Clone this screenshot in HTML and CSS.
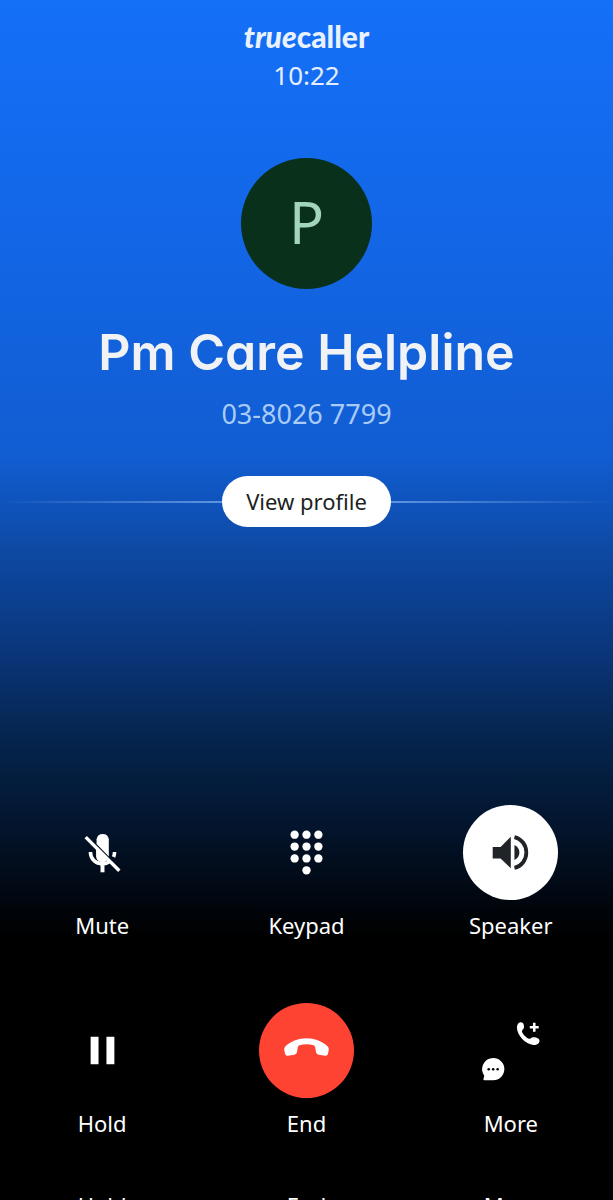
FILE: index.html
```html
<!DOCTYPE html>
<html lang="en">
<head>
    <meta charset="UTF-8">
    <meta name="viewport" content="width=device-width, initial-scale=1.0">
    <title>Truecaller</title>
    <link rel="stylesheet" href="styles.css">
</head>
<body>
    <main class="call-screen">
        <header class="top">
            <div class="logo"><em>true</em>caller</div>
            <time class="timer">10:22</time>
        </header>

        <section class="caller">
            <div class="avatar">P</div>
            <h1 class="name">Pm Care Helpline</h1>
            <p class="number">03-8026 7799</p>
        </section>

        <div class="profile-row">
            <button type="button" class="profile-btn">View profile</button>
        </div>

        <section class="controls">
            <button type="button" class="control">
                <span class="circle">
                    <svg viewBox="0 0 96 96" aria-hidden="true">
                        <path fill="#fff" d="M42 34.500a6.300 6.300 0 0 1 12.400 0v17.500L42 39.500z"/>
                        <path fill="#fff" d="M41.500 44l11.500 11.500a6.500 6.500 0 0 1-11.500-4z"/>
                        <path fill="none" stroke="#fff" stroke-width="3.600" d="M35.800 47.500c0 7 5.200 12 12.200 12 3 0 5.200-.8 7-2.200M60.200 47.500c0 2-.4 3.600-1 5"/>
                        <path fill="#fff" d="M46 59h4v9h-4z"/>
                        <path fill="none" stroke="#fff" stroke-width="3.400" d="M31 32.500l34 34"/>
                    </svg>
                </span>
                <span class="label">Mute</span>
            </button>
            <button type="button" class="control">
                <span class="circle">
                    <svg viewBox="0 0 96 96" aria-hidden="true" fill="#fff">
                        <circle cx="36" cy="30" r="4.200"/><circle cx="48" cy="30" r="4.200"/><circle cx="60" cy="30" r="4.200"/>
                        <circle cx="36" cy="42" r="4.200"/><circle cx="48" cy="42" r="4.200"/><circle cx="60" cy="42" r="4.200"/>
                        <circle cx="36" cy="54" r="4.200"/><circle cx="48" cy="54" r="4.200"/><circle cx="60" cy="54" r="4.200"/>
                        <circle cx="48" cy="66" r="4.200"/>
                    </svg>
                </span>
                <span class="label">Keypad</span>
            </button>
            <button type="button" class="control">
                <span class="circle white">
                    <svg viewBox="0 0 96 96" aria-hidden="true" fill="#202327">
                        <path d="M30 42.500h8L48.300 32v32L38 54h-8z"/>
                        <path d="M52 40.500c3 1.200 5 4.200 5 7.500s-2 6.300-5 7.500z"/>
                        <path fill="none" stroke="#202327" stroke-width="3.800" d="M52 32.500c7 1.500 12 7.800 12 15.500s-5 14-12 15.500"/>
                    </svg>
                </span>
                <span class="label">Speaker</span>
            </button>
            <button type="button" class="control">
                <span class="circle">
                    <svg viewBox="0 0 96 96" aria-hidden="true" fill="#fff">
                        <path d="M36 34h8v28h-8zM52 34h8v28h-8z"/>
                    </svg>
                </span>
                <span class="label">Hold</span>
            </button>
            <button type="button" class="control">
                <span class="circle red">
                    <svg viewBox="0 0 96 96" aria-hidden="true" fill="#fff">
                        <path d="M48 35.500c-8 0-15.500 2.800-21 8-1.300 1.300-1.700 2.700-1.400 4.500l.8 3.500c.4 1.300 1.300 1.900 2.600 1.700l6.800-1c1.400-.3 2.200-1 2.500-2.400l1-5.400c.2-1 .7-1.500 1.700-1.800 4.500-1.200 9.500-1.200 14 0 1 .3 1.500.8 1.700 1.800l1 5.400c.3 1.400 1.100 2.100 2.500 2.400l6.800 1c1.300.2 2.200-.4 2.600-1.700l.8-3.500c.3-1.800-.1-3.200-1.400-4.500-5.500-5.200-13-8-21-8z"/>
                    </svg>
                </span>
                <span class="label">End</span>
            </button>
            <button type="button" class="control">
                <span class="circle">
                    <svg viewBox="0 0 96 96" aria-hidden="true" fill="#fff">
                        <path d="M56 20.500c1-1.400 3.400-1.600 4.500-.2 1 1.200 1.400 3.400 1 5-.3 1.300-1.800 2-1.900 3.200-.1 2 4.800 7.300 7.200 7.700 1.400.2 2.400-1.400 3.900-1.600 2-.3 4.300.3 5.700 1.500 1.200 1 1.300 2.900.2 4.200-1.400 1.600-3.300 2.300-5.500 2.100-8-.8-16.500-9.800-16.600-17.400 0-1.700.5-3.200 1.500-4.500z"/>
                        <path fill="none" stroke="#fff" stroke-width="2.600" d="M72 20v9M67.500 24.500h9"/>
                        <path d="M30.500 55.500a11.300 11.300 0 1 1 0 22.600H21.500c-.8 0-1-.6-.8-1.200l.8-3.500a11.300 11.300 0 0 1 9-17.900z"/>
                        <g fill="#000"><circle cx="26" cy="67" r="1.300"/><circle cx="30.500" cy="67" r="1.300"/><circle cx="35" cy="67" r="1.300"/></g>
                    </svg>
                </span>
                <span class="label">More</span>
            </button>
        </section>

        <div class="next-row">
            <span class="label">Hold</span>
            <span class="label">End</span>
            <span class="label">More</span>
        </div>
    </main>
</body>
</html>
```
FILE: styles.css
```css
* {
    box-sizing: border-box;
}
body {
    margin: 0;
    background: #000;
    color: #fff;
    font-family: "Noto Sans", sans-serif;
}
button {
    font-family: inherit;
    border: none;
    padding: 0;
    cursor: pointer;
}
.call-screen {
    height: 100vh;
    overflow: hidden;
    background: linear-gradient(to bottom, #1470f8 0, #1366e6 20%, #115dd2 38%, #0d49a3 46%, #0a367c 54%, #052650 61%, #03142c 69%, #000 78%);
}
.top {
    display: flex;
    flex-direction: column;
    align-items: center;
    padding-top: 18px;
}
.logo {
    font-family: Lato, sans-serif;
    font-size: 30px;
    font-weight: 900;
    line-height: 36px;
    color: #e8f1fe;
}
.timer {
    font-size: 26px;
    line-height: 42px;
    color: #e4eefe;
}
.caller {
    display: flex;
    flex-direction: column;
    align-items: center;
    padding-top: 62px;
}
.avatar {
    width: 131px;
    height: 131px;
    border-radius: 50%;
    background: #08301b;
    color: #a2d5b9;
    font-size: 58px;
    line-height: 128px;
    text-align: center;
}
.name {
    margin: 31px 0 0;
    font-family: Inter, sans-serif;
    font-size: 50px;
    font-weight: 600;
    line-height: 64px;
    font-feature-settings: "cv11";
    color: #f0f2f5;
}
.number {
    margin: 10px 0 0;
    font-size: 27px;
    line-height: 40px;
    color: #a9cbf8;
}
.profile-row {
    display: flex;
    align-items: center;
    margin-top: 42px;
}
.profile-row::before,
.profile-row::after {
    content: "";
    flex: 1;
    height: 2px;
    background: linear-gradient(to right, transparent, #5f93e0);
}
.profile-row::after {
    background: linear-gradient(to left, transparent, #5f93e0);
}
.profile-btn {
    height: 51px;
    padding: 0 24px 2px;
    border-radius: 26px;
    background: #fff;
    color: #1c1f23;
    font-size: 22px;
}
.controls {
    display: grid;
    grid-template-columns: repeat(3, 1fr);
    row-gap: 63px;
    margin-top: 278px;
}
.control {
    display: flex;
    flex-direction: column;
    align-items: center;
    background: none;
    color: #fff;
}
.circle {
    width: 95px;
    height: 95px;
    border-radius: 50%;
}
.circle svg {
    display: block;
    width: 100%;
    height: 100%;
}
.white {
    background: #fff;
}
.red {
    background: #ff4332;
}
.label {
    font-size: 22px;
    line-height: 30px;
}
.control .label {
    margin-top: 10px;
}
/* labels of the next row, cut off by the screen edge */
.next-row {
    display: grid;
    grid-template-columns: repeat(3, 1fr);
    margin-top: 52px;
    text-align: center;
}
```
